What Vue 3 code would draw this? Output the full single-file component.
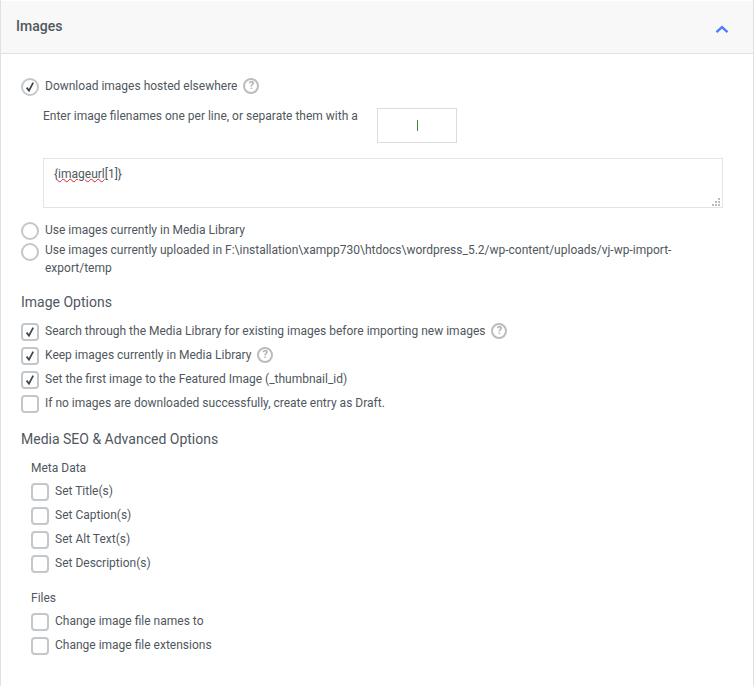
<template>
  <section class="panel">
    <header class="panel-head">
      <h3>Images</h3>
      <svg class="chevron" width="14" height="9" viewBox="0 0 14 9">
        <path d="M1.5 7.2 7 2.2l5.5 5" fill="none" stroke="#4a7dff" stroke-width="2.4" />
      </svg>
    </header>

    <div class="panel-body">
      <label class="option radio first">
        <span class="mark round">
          <svg width="12" height="12" viewBox="0 0 12 12"><path d="M2.6 6.6 5 9.6 9.2 1.6" fill="none" stroke="#3c434a" stroke-width="1.7" /></svg>
        </span>
        <span class="label">Download images hosted elsewhere</span>
        <span class="help">?</span>
      </label>

      <div class="download-fields">
        <div class="separator-row">
          <span class="hint">Enter image filenames one per line, or separate them with a</span>
          <div class="separator-input"><i class="caret"></i></div>
        </div>
        <div class="textarea">
          <span class="typed">{<span class="squiggle">imageurl</span>[1]}</span>
          <svg class="grip" width="9" height="9" viewBox="0 0 9 9">
            <path d="M0 7h2v2H0zM3 7h2v2H3zM6 7h2v2H6zM3 4h2v2H3zM6 4h2v2H6zM6 1h2v2H6z" fill="#bdbdbd" />
          </svg>
        </div>
      </div>

      <label class="option radio tight">
        <span class="mark round"></span>
        <span class="label">Use images currently in Media Library</span>
      </label>
      <label class="option radio wrap">
        <span class="mark round"></span>
        <span class="label">Use images currently uploaded in F:\installation\xampp730\htdocs\wordpress_5.2/wp-content/uploads/vj-wp-import-export/temp</span>
      </label>

      <h4 class="image-options">Image Options</h4>
      <label v-for="item in imageOptions" :key="item.text" class="option check">
        <span class="mark">
          <svg v-if="item.on" width="12" height="12" viewBox="0 0 12 12"><path d="M2.6 6.6 5 9.6 9.2 1.6" fill="none" stroke="#3c434a" stroke-width="1.7" /></svg>
        </span>
        <span class="label">{{ item.text }}</span>
        <span v-if="item.help" class="help">?</span>
      </label>

      <h4 class="media-seo">Media SEO &amp; Advanced Options</h4>
      <div class="sub-group">
        <h5>Meta Data</h5>
        <label v-for="text in metaOptions" :key="text" class="option check">
          <span class="mark"></span>
          <span class="label">{{ text }}</span>
        </label>
        <h5 class="files">Files</h5>
        <label v-for="text in fileOptions" :key="text" class="option check">
          <span class="mark"></span>
          <span class="label">{{ text }}</span>
        </label>
      </div>
    </div>
  </section>
</template>

<script setup>
const imageOptions = [
  { text: 'Search through the Media Library for existing images before importing new images', on: true, help: true },
  { text: 'Keep images currently in Media Library', on: true, help: true },
  { text: 'Set the first image to the Featured Image (_thumbnail_id)', on: true },
  { text: 'If no images are downloaded successfully, create entry as Draft.', on: false },
]

const metaOptions = ['Set Title(s)', 'Set Caption(s)', 'Set Alt Text(s)', 'Set Description(s)']
const fileOptions = ['Change image file names to', 'Change image file extensions']
</script>

<style>
body {
  background: #fff;
}
</style>

<style scoped>
.panel {
  width: 754px;
  height: 686px;
  box-sizing: border-box;
  padding-top: 1px;
  border-left: 1px solid #e1e1e1;
  border-right: 1px solid #e1e1e1;
  overflow: hidden;
  background: #fff;
  font-family: Roboto, "Liberation Sans", sans-serif;
  font-size: 12px;
  color: #50575e;
}

.panel-head {
  height: 53px;
  box-sizing: border-box;
  display: flex;
  align-items: center;
  justify-content: space-between;
  padding: 0 24px 0 15px;
  background: #f8f8f8;
  border-bottom: 1px solid #e1e1e1;
}

.panel-head h3 {
  margin: 0 0 2px;
  font-size: 14px;
  font-weight: 500;
  color: #50575e;
}

.chevron {
  margin-top: 4px;
}

.panel-body {
  padding: 0 30px 0 20px;
}

.option {
  display: flex;
  align-items: center;
  min-height: 18px;
  line-height: 18px;
}

.mark {
  flex: none;
  width: 18px;
  height: 18px;
  box-sizing: border-box;
  display: flex;
  align-items: center;
  justify-content: center;
  margin-right: 6px;
  border: 2px solid #c4c7ca;
  border-radius: 4px;
  background: #fff;
}

.mark.round {
  border-radius: 50%;
}

.label {
  margin-top: -2px;
}

.first {
  margin-top: 24px;
}

.help {
  flex: none;
  width: 16px;
  height: 16px;
  box-sizing: border-box;
  margin: -2px 0 0 6px;
  border: 2px solid #bcbcbc;
  border-radius: 50%;
  color: #b0b0b0;
  font-size: 11px;
  font-weight: 700;
  line-height: 12px;
  text-align: center;
}

.download-fields {
  padding-left: 22px;
}

.separator-row {
  display: flex;
  align-items: flex-start;
  margin-top: 12px;
}

.hint {
  width: 334px;
  line-height: 16px;
}

.separator-input {
  width: 80px;
  height: 35px;
  box-sizing: border-box;
  display: flex;
  align-items: center;
  justify-content: center;
  border: 1px solid #dcdcdc;
}

.caret {
  width: 1px;
  height: 11px;
  background: #3f8a3a;
}

.textarea {
  position: relative;
  width: 680px;
  height: 50px;
  box-sizing: border-box;
  margin-top: 15px;
  padding: 7px 10px;
  border: 1px solid #e4e4e4;
  line-height: 16px;
}

.squiggle {
  text-decoration: underline wavy #e02020 1px;
  text-underline-offset: 0;
}

.grip {
  position: absolute;
  right: 1px;
  bottom: 1px;
}

.tight {
  margin-top: 14px;
}

.wrap {
  align-items: flex-start;
  margin-top: 3px;
}

h4 {
  margin: 0;
  font-size: 14px;
  font-weight: 400;
  line-height: 18px;
  color: #50575e;
}

.image-options {
  margin-top: 16px;
  margin-bottom: 12px;
}

.check {
  margin-bottom: 6px;
}

.media-seo {
  margin-top: 17px;
}

.sub-group {
  padding-left: 10px;
  margin-top: 12px;
}

h5 {
  margin: 0 0 7px;
  font-size: 12px;
  font-weight: 400;
  line-height: 16px;
  color: #50575e;
}

.files {
  margin-top: 17px;
}
</style>
